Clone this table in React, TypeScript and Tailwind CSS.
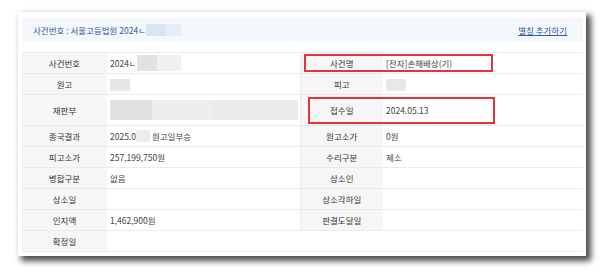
const font = { fontFamily: '"Noto Sans CJK KR", "Noto Sans", sans-serif' };

function Blur({ className }: { className: string }) {
  return <span className={`inline-block align-middle ${className}`} />;
}

type Row = {
  l1: string;
  v1: React.ReactNode;
  l2?: string;
  v2?: React.ReactNode;
  tall?: boolean;
};

const rows: Row[] = [
  {
    l1: "사건번호",
    v1: (
      <span className="flex items-center">
        2024ㄴ
        <Blur className="h-[16px] w-[20px] bg-[#e2e2e2]" />
        <Blur className="h-[16px] w-[24px] bg-[#f0f0f0]" />
      </span>
    ),
    l2: "사건명",
    v2: "[전자]손해배상(기)",
  },
  {
    l1: "원고",
    v1: <Blur className="h-[12px] w-[20px] bg-[#e6e6e6]" />,
    l2: "피고",
    v2: <Blur className="h-[12px] w-[20px] bg-[#e8e8e8]" />,
  },
  {
    l1: "재판부",
    v1: (
      <span className="flex items-center">
        <Blur className="h-[20px] w-[42px] bg-[#e2e2e2]" />
        <Blur className="h-[20px] w-[60px] bg-[#eeeeee]" />
        <Blur className="h-[20px] w-[86px] bg-[#ebebeb]" />
      </span>
    ),
    l2: "접수일",
    v2: "2024.05.13",
    tall: true,
  },
  {
    l1: "종국결과",
    v1: (
      <span className="flex items-center">
        2025.0
        <Blur className="h-[12px] w-[14px] bg-[#ececec]" />
        <span className="ml-[2px]">원고일부승</span>
      </span>
    ),
    l2: "원고소가",
    v2: "0원",
  },
  { l1: "피고소가", v1: "257,199,750원", l2: "수리구분", v2: "제소" },
  { l1: "병합구분", v1: "없음", l2: "상소인", v2: "" },
  { l1: "상소일", v1: "", l2: "상소각하일", v2: "" },
  { l1: "인지액", v1: "1,462,900원", l2: "판결도달일", v2: "" },
  { l1: "확정일", v1: "" },
];

export default function App() {
  return (
    <div className="h-[272px] w-[606px] bg-white pl-[18px] pt-[12px]" style={font}>
      <div className="relative h-[244px] w-[568px] bg-white pl-[4px] pr-[3px] pt-[6px] shadow-[4px_4px_6px_1px_rgba(0,0,0,0.7)]">
        <div className="flex h-[24px] items-center justify-between bg-[#f4f7fb] pl-[11px] pr-[16px] text-[8.5px] text-[#2e5aa5]">
          <span className="flex items-center">
            사건번호 : 서울고등법원 2024ㄴ
            <Blur className="h-[12px] w-[20px] bg-[#d9e4f4]" />
            <Blur className="h-[12px] w-[15px] bg-[#e5edf8]" />
          </span>
          <span className="underline">별칭 추가하기</span>
        </div>

        <table className="mt-[10px] w-[561px] table-fixed border-collapse text-[8.5px] text-[#444]">
          <colgroup>
            <col className="w-[85px]" />
            <col className="w-[193px]" />
            <col className="w-[83px]" />
            <col className="w-[200px]" />
          </colgroup>
          <tbody>
            {rows.map((r) => (
              <tr
                key={r.l1}
                className={`border-y border-[#ebebeb] ${r.tall ? "h-[31px]" : "h-[21px]"}`}
              >
                <td className="bg-[#f6f6f6] text-center text-[#333]">{r.l1}</td>
                {r.l2 !== undefined ? (
                  <>
                    <td className="border-r border-[#ebebeb] pl-[3px]">{r.v1}</td>
                    <td className="bg-[#f6f6f6] text-center text-[#333]">{r.l2}</td>
                    <td className="pl-[3px]">{r.v2}</td>
                  </>
                ) : (
                  <td colSpan={3} />
                )}
              </tr>
            ))}
          </tbody>
        </table>

        <div className="absolute left-[286px] top-[42px] h-[18px] w-[189px] border-2 border-[#e0353d]" />
        <div className="absolute left-[290px] top-[85px] h-[27px] w-[187px] border-2 border-[#e0353d]" />
      </div>
    </div>
  );
}
